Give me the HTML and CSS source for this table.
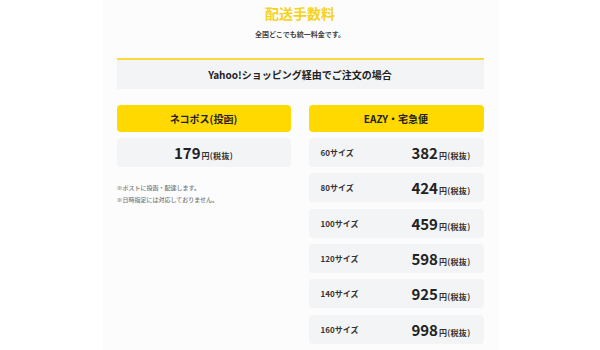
FILE: index.html
```html
<!DOCTYPE html>
<html lang="ja">
<head>
<meta charset="utf-8">
<link rel="stylesheet" href="styles.css">
</head>
<body>
<main class="panel">
  <h1 class="title">配送手数料</h1>
  <p class="lead">全国どこでも統一料金です。</p>
  <div class="route">Yahoo!ショッピング経由でご注文の場合</div>
  <div class="cols">
    <section class="col">
      <div class="btn">ネコポス(投函)</div>
      <div class="row row-center"><span class="amount"><span class="price">179</span><span class="unit">円(税抜)</span></span></div>
      <ul class="notes">
        <li>※ポストに投函・配達します。</li>
        <li>※日時指定には対応しておりません。</li>
      </ul>
    </section>
    <section class="col">
      <div class="btn">EAZY・宅急便</div>
      <div class="row"><span class="size">60サイズ</span><span class="amount"><span class="price">382</span><span class="unit">円(税抜)</span></span></div>
      <div class="row"><span class="size">80サイズ</span><span class="amount"><span class="price">424</span><span class="unit">円(税抜)</span></span></div>
      <div class="row"><span class="size">100サイズ</span><span class="amount"><span class="price">459</span><span class="unit">円(税抜)</span></span></div>
      <div class="row"><span class="size">120サイズ</span><span class="amount"><span class="price">598</span><span class="unit">円(税抜)</span></span></div>
      <div class="row"><span class="size">140サイズ</span><span class="amount"><span class="price">925</span><span class="unit">円(税抜)</span></span></div>
      <div class="row"><span class="size">160サイズ</span><span class="amount"><span class="price">998</span><span class="unit">円(税抜)</span></span></div>
    </section>
  </div>
</main>
</body>
</html>
```
FILE: styles.css
```css
html, body {
  margin: 0;
  padding: 0;
  background: #ffffff;
}
body {
  font-family: "Noto Sans CJK JP", "Noto Sans", sans-serif;
  color: #222;
}
.panel {
  width: 395px;
  height: 350px;
  box-sizing: border-box;
  margin: 0 auto;
  padding: 3px 14px 0;
  background: #fcfcfc;
}
.title {
  margin: 0;
  text-align: center;
  font-size: 14px;
  line-height: 20px;
  font-weight: 700;
  color: #f7d21a;
}
.lead {
  margin: 6px 0 0;
  text-align: center;
  font-size: 7px;
  line-height: 10px;
  font-weight: 700;
  color: #444;
}
.route {
  margin-top: 19px;
  border-top: 2px solid #fbdb3c;
  background: #f3f4f6;
  height: 29px;
  display: flex;
  align-items: center;
  justify-content: center;
  font-size: 10px;
  font-weight: 700;
  color: #222;
}
.cols {
  margin-top: 15.5px;
  display: grid;
  grid-template-columns: 174px 175px;
  column-gap: 18px;
  align-items: start;
}
.col {
  display: flex;
  flex-direction: column;
  gap: 6.3px;
}
.btn {
  height: 27.4px;
  background: #ffd900;
  border-radius: 4px;
  display: flex;
  align-items: center;
  justify-content: center;
  font-size: 10px;
  font-weight: 700;
  color: #222;
}
.row {
  height: 29px;
  background: #f3f4f6;
  border-radius: 4px;
  display: flex;
  align-items: center;
  justify-content: space-between;
  padding: 0 13px 0 12px;
}
.row-center {
  justify-content: center;
  padding: 0;
}
.size {
  font-size: 8px;
  font-weight: 700;
  color: #333;
}
.amount {
  display: flex;
  align-items: baseline;
}
.price {
  font-size: 15px;
  font-weight: 700;
  color: #222;
  line-height: 1;
}
.unit {
  font-size: 8px;
  font-weight: 700;
  color: #333;
  margin-left: 1px;
  letter-spacing: 0.3px;
  line-height: 1;
}
.notes {
  list-style: none;
  margin: 9px 0 0;
  padding: 0;
  font-size: 6px;
  line-height: 12px;
  color: #777;
  font-weight: 500;
}
```
